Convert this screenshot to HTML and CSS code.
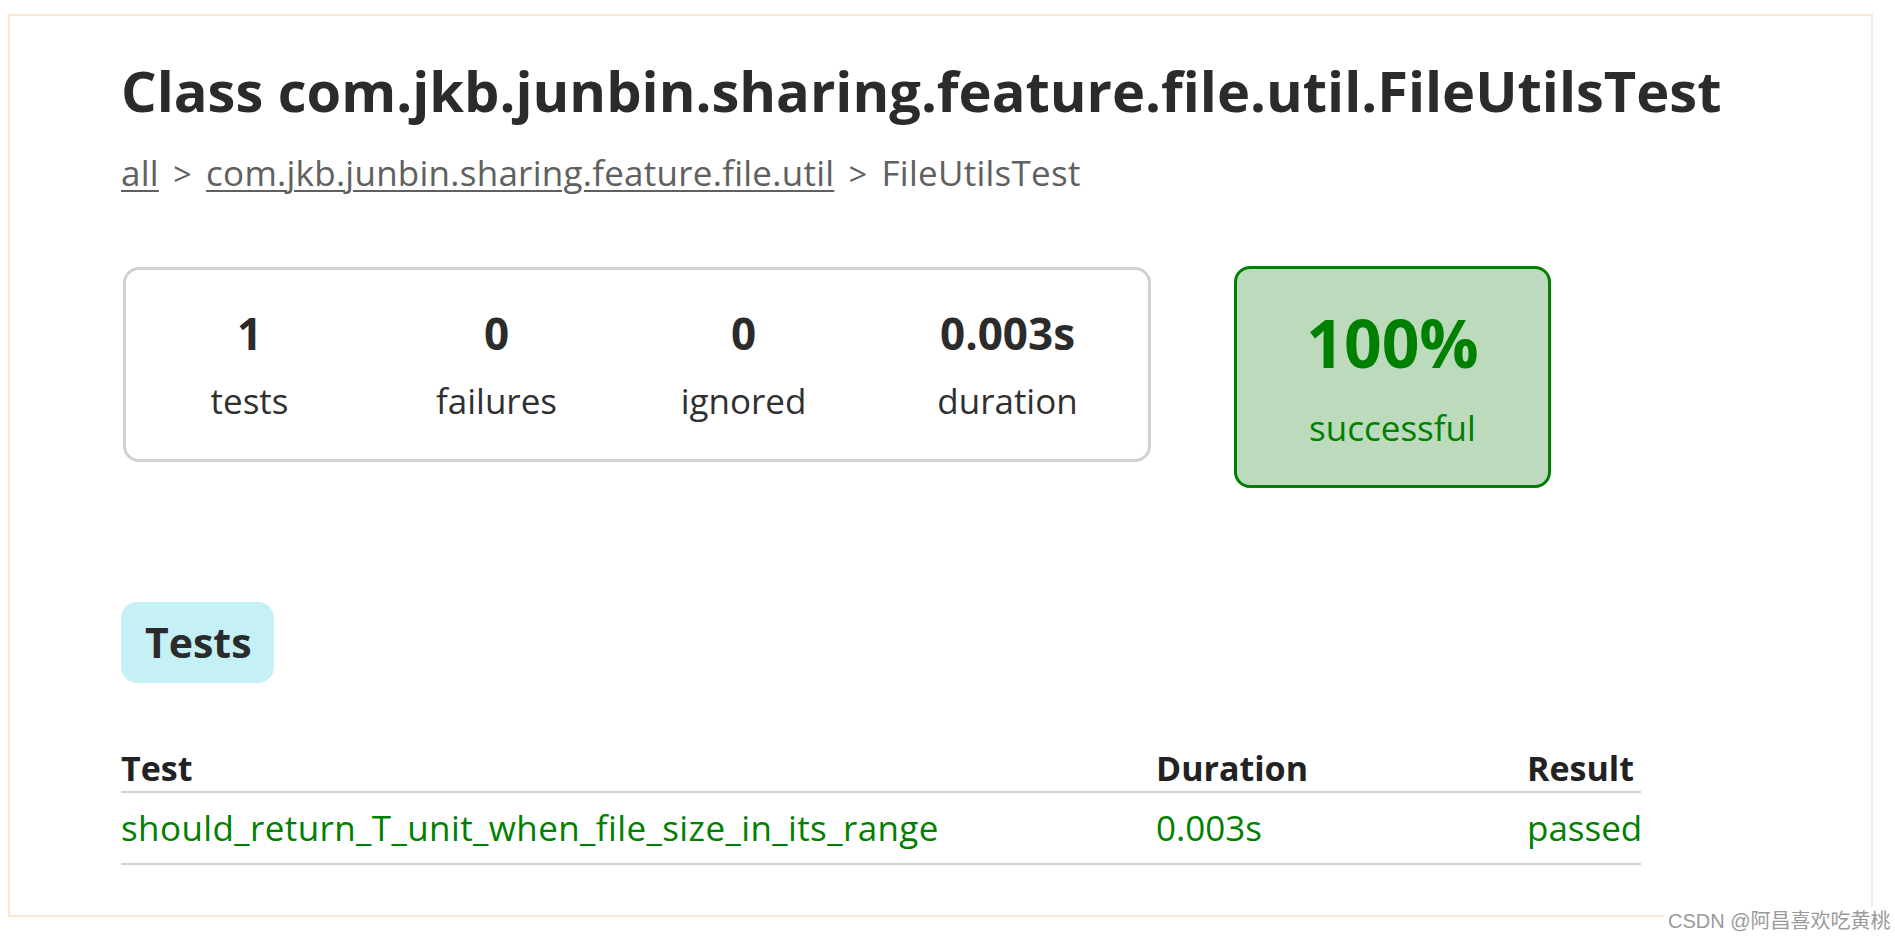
FILE: index.html
```html
<!DOCTYPE html>
<html lang="en">
<head>
<meta charset="utf-8">
<title>Test results - Class com.jkb.junbin.sharing.feature.file.util.FileUtilsTest</title>
<link rel="stylesheet" href="styles.css">
</head>
<body>
<div class="frame">
  <div class="content">
    <h1 class="title">Class com.jkb.junbin.sharing.feature.file.util.FileUtilsTest</h1>
    <div class="breadcrumbs"><a href="#">all</a> <span class="sep">&gt;</span> <a href="#">com.jkb.junbin.sharing.feature.file.util</a> <span class="sep">&gt;</span> FileUtilsTest</div>
    <div class="summary">
      <div class="summaryGroup">
        <div class="infoBox"><div class="counter">1</div><p>tests</p></div>
        <div class="infoBox"><div class="counter">0</div><p>failures</p></div>
        <div class="infoBox"><div class="counter">0</div><p>ignored</p></div>
        <div class="infoBox duration"><div class="counter">0.003s</div><p>duration</p></div>
      </div>
      <div class="successRate">
        <div class="percent">100%</div>
        <p>successful</p>
      </div>
    </div>
    <ul class="tabLinks"><li class="selected"><a href="#">Tests</a></li></ul>
    <table class="tests">
      <thead><tr><th class="c1">Test</th><th class="c2">Duration</th><th class="c3">Result</th></tr></thead>
      <tbody><tr><td class="success name">should_return_T_unit_when_file_size_in_its_range</td><td class="success">0.003s</td><td class="success">passed</td></tr></tbody>
    </table>
  </div>
</div>
<div class="watermark">CSDN @阿昌喜欢吃黄桃</div>
</body>
</html>
```

FILE: styles.css
```css
html, body {
  margin: 0;
  padding: 0;
  background: #ffffff;
}

body {
  font-family: "Open Sans", "Noto Sans", sans-serif;
  color: #303030;
  position: relative;
  width: 1895px;
  height: 941px;
  overflow: hidden;
}

a {
  color: inherit;
}

.frame {
  box-sizing: border-box;
  margin: 14px 0 0 8px;
  width: 1865px;
  height: 903px;
  border: 2px solid #fbe8d3;
}

.content {
  padding-left: 111px;
}

.title {
  margin: 41px 0 0;
  font-size: 56px;
  line-height: 66px;
  font-weight: 700;
  white-space: nowrap;
  color: #2b2b2b;
}

.breadcrumbs {
  margin-top: 28px;
  height: 44px;
  font-size: 35px;
  line-height: 44px;
  letter-spacing: 0.25px;
  word-spacing: 5px;
  color: #606060;
  white-space: nowrap;
}

.breadcrumbs .sep {
  font-size: 32px;
  line-height: 0;
}

.breadcrumbs a {
  color: #606060;
  text-decoration-thickness: 2px;
  text-underline-offset: 4px;
}

.summary {
  margin-top: 71px;
  display: flex;
  align-items: flex-start;
}

.summaryGroup {
  box-sizing: border-box;
  margin: 1px 0 0 2px;
  width: 1028px;
  height: 195px;
  border: 3px solid #d0d0d0;
  border-radius: 16px;
  display: flex;
}

.infoBox {
  width: 247px;
  text-align: center;
  padding-top: 38px;
}

.infoBox.duration {
  width: 281px;
}

.counter {
  font-size: 44px;
  line-height: 50px;
  font-weight: 700;
  color: #2b2b2b;
}

.infoBox p {
  margin: 21px 0 0;
  font-size: 35px;
  line-height: 44px;
}

.successRate {
  box-sizing: border-box;
  margin-left: 83px;
  width: 317px;
  height: 222px;
  border: 3px solid #008000;
  border-radius: 16px;
  background: #bcdbbc;
  color: #008000;
  text-align: center;
  padding-top: 38px;
}

.percent {
  font-size: 66px;
  line-height: 70px;
  font-weight: 700;
}

.successRate p {
  margin: 29px 0 0;
  font-size: 35px;
  line-height: 44px;
}

.tabLinks {
  list-style: none;
  margin: 114px 0 0;
  padding: 0;
  display: flex;
}

.tabLinks li {
  height: 81px;
  padding: 0 22px 0 24px;
  border-radius: 16px;
  background: #c5f0f5;
}

.tabLinks a {
  display: block;
  font-size: 41px;
  line-height: 81px;
  font-weight: 700;
  text-decoration: none;
  color: #2b2b2b;
}

.tests {
  margin-top: 62px;
  border-collapse: collapse;
  table-layout: fixed;
  width: 1520px;
}

.tests th {
  text-align: left;
  font-size: 34px;
  line-height: 46px;
  font-weight: 700;
  padding: 0;
  white-space: nowrap;
  border-bottom: 2px solid #d3d3d3;
  color: #222222;
}

.tests th.c1 { width: 1035px; }
.tests th.c2 { width: 371px; }
.tests th.c3 { width: 114px; }

.tests td {
  font-size: 35px;
  line-height: 48px;
  padding: 11px 0 11px;
  white-space: nowrap;
  border-bottom: 2px solid #d3d3d3;
}

.tests td.name {
  letter-spacing: 0.4px;
}

.success {
  color: #008000;
}

.watermark {
  position: absolute;
  left: 1664px;
  top: 907px;
  padding: 0 6px 0 4px;
  background: #ffffff;
  font-family: "Liberation Sans", "Noto Sans CJK SC", sans-serif;
  font-size: 20px;
  line-height: 28px;
  color: #9a9a9a;
  white-space: nowrap;
}
```
